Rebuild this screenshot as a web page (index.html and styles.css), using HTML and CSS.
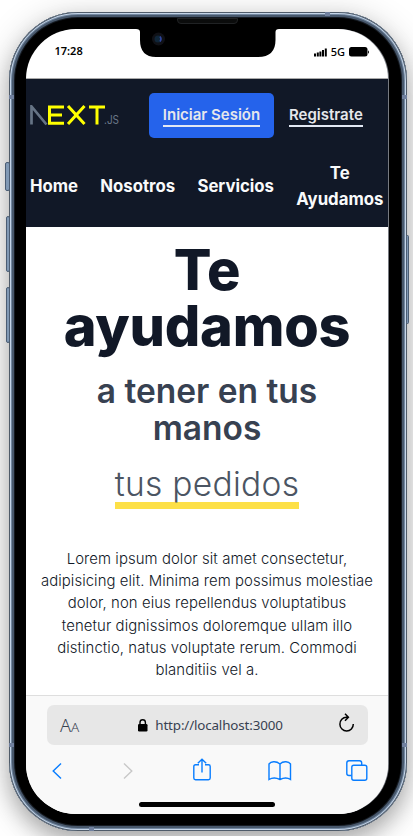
FILE: index.html
```html
<!DOCTYPE html>
<html lang="es">
<head>
<meta charset="utf-8">
<meta name="viewport" content="width=device-width, initial-scale=1">
<title>Te ayudamos</title>
<link rel="stylesheet" href="styles.css">
</head>
<body>
<div class="phone">
  <i class="key mute"></i><i class="key up"></i><i class="key down"></i><i class="key power"></i>
  <i class="band b1"></i><i class="band b2"></i><i class="band b3"></i><i class="band b4"></i><i class="band b5"></i><i class="band b6"></i>
  <svg class="notch" viewBox="0 0 143 29" width="143" height="29"><path d="M0 0H143V1Q139.500 1 139.500 4V12Q139.500 29 122 29H20Q4 29 4 12V4Q4 1 0 1Z"/><circle cx="22.500" cy="11" r="6.500" fill="#101116"/><circle cx="22" cy="11" r="3.500" fill="#102638"/><path d="M24 8.500q2 2.500 0 5" stroke="#3046a0" stroke-width="1.500" fill="none"/></svg>
  <i class="speaker"></i>
  <div class="screen">
    <div class="status">
      <span class="time">17:28</span>
      <span class="signal">
        <svg width="13" height="9" viewBox="0 0 13 9"><path d="M0 5.500h2V8.500H0zM2.800 4.500h2v4h-2zM5.400 3.500h2v5h-2zM8 2h2v6.500H8zM10.800 .5h2v8h-2z"/></svg>
        <b>5G</b>
        <svg width="20" height="10" viewBox="0 0 20 10"><rect width="18.500" height="9.500" rx="2.500"/><path d="M19 3.200q2 1.800 0 3.600z"/></svg>
      </span>
    </div>
    <header class="site-header">
      <div class="top">
        <svg class="logo" width="92" height="22" viewBox="0 0 92 22">
          <path d="M1.500 19.500V1.500L16.500 19.500" fill="none" stroke="#667485" stroke-width="2.700"/>
          <path d="M34 2H19.500V18.300H34M20 10H32M38 1L54.500 19M54.500 1L38 19M59 2H75M67 2V19.500" fill="none" stroke="#ffff00" stroke-width="3"/>
          <text x="74" y="19" class="js" textLength="15" lengthAdjust="spacingAndGlyphs">.JS</text>
        </svg>
        <a class="login"><span class="ul">Iniciar Sesión</span></a>
        <a class="ul register">Registrate</a>
      </div>
      <nav class="nav"><a>Home</a><a>Nosotros</a><a>Servicios</a><a>Te<br>Ayudamos</a></nav>
    </header>
    <main class="hero">
      <h1>Te<br>ayudamos</h1>
      <h2>a tener en tus<br>manos</h2>
      <h3><span>tus pedidos</span></h3>
      <p>Lorem ipsum dolor sit amet consectetur,<br>adipisicing elit. Minima rem possimus molestiae<br>dolor, non eius repellendus voluptatibus<br>tenetur dignissimos doloremque ullam illo<br>distinctio, natus voluptate rerum. Commodi<br>blanditiis vel a.</p>
    </main>
    <footer class="browser">
      <div class="address">
        <span class="aa">A<small>A</small></span>
        <span class="url"><svg width="10" height="13" viewBox="0 0 10 13"><rect y="5" width="9.500" height="7.500" rx="1.200"/><path d="M2 6V3.500a2.700 2.700 0 0 1 5.400 0V6" fill="none" stroke="#000" stroke-width="1.400"/></svg><span>http://localhost:3000</span></span>
        <svg class="reload" width="17" height="20" viewBox="0 0 17 20"><path d="M9.800 4.200H8.500a6.700 6.900 0 1 0 6.800 6.800M7 .8L10.400 4.200L7 7.700" fill="none" stroke="#000" stroke-width="1.500"/></svg>
      </div>
      <div class="tools">
        <svg width="10" height="18" viewBox="0 0 10 18"><path d="M9 1.500L1.200 9L9 16.500"/></svg>
        <svg class="off" width="10" height="18" viewBox="0 0 10 18"><path d="M1 1.500L8.800 9L1 16.500"/></svg>
        <svg class="share" width="18" height="23" viewBox="0 0 18 23"><path d="M6 6.800H2.500Q.8 6.800 .8 8.500V20Q.8 21.700 2.500 21.700H15.500Q17.200 21.700 17.200 20V8.500Q17.200 6.800 15.500 6.800H12M9 14.500V1.500M4.800 5.200L9 1.200L13.200 5.200"/></svg>
        <svg class="book" width="24" height="20" viewBox="0 0 24 20"><path d="M12 18.500V3Q9 .5 5.500 .8Q2.500 1 1 3V18.500Q6 15.500 12 18.500Q18 15.500 22.500 18.500V3Q21 1 18 .8Q14.500 .5 12 3"/></svg>
        <svg class="tabs" width="22" height="21" viewBox="0 0 22 21"><rect x="5.800" y="5.300" width="15" height="15" rx="2"/><path d="M5.500 15.500H3Q.8 15.500 .8 13.500V3Q.8 .8 3 .8H13.500Q15.700 .8 15.700 3V5"/></svg>
      </div>
      <div class="home-bar"></div>
    </footer>
  </div>
</div>
</body>
</html>
```
FILE: styles.css
```css
* { box-sizing: border-box; }
html, body { margin: 0; height: 836px; overflow: hidden; }
body { background: #fff; font-family: Inter, "Noto Sans", sans-serif; }
.phone {
  position: relative; width: 398px; height: 819px; margin: 12px 0 0 9px; padding: 17px 19px 17px 17px;
  border-radius: 69px; background: #000;
  box-shadow: inset 0 0 0 1px #4f5b69, inset 0 0 0 2px #c5d5e8, inset 0 0 0 3px #7388a1, inset 0 0 0 5px #48586c, inset 0 0 0 6px #151a21,
    0 10px 20px rgba(0,0,0,.22), 0 6px 36px rgba(0,0,0,.2);
}
.key { position: absolute; width: 4px; background: #8199b5; border: 1px solid #4b5d74; border-radius: 2px; left: -3px; }
.mute { top: 150px; height: 29px; left: -4px; width: 5px; }
.up { top: 204px; height: 56px; }
.down { top: 275px; height: 56px; }
.power { top: 223px; height: 89px; left: 397px; width: 3px; }
.band { position: absolute; width: 5px; height: 4px; background: #71819f; }
.b1 { left: 0; top: 83px; } .b2 { right: 0; top: 83px; }
.b3 { left: 0; top: 731px; } .b4 { right: 0; top: 731px; }
.b5 { left: 80px; bottom: 0; } .b6 { right: 77px; top: 0; }
.screen { width: 362px; height: 785px; border-radius: 50px; overflow: hidden; background: #fff; display: flex; flex-direction: column; box-shadow: 1px 0 0 #777a80; }
.notch { position: absolute; z-index: 2; left: 127px; top: 16px; }
.speaker { position: absolute; z-index: 3; left: 168px; top: 6px; width: 61px; height: 6px; border-radius: 0 0 4px 4px; background: #0b0c0c; border: 1px solid #202224; }
.status { height: 50px; flex: none; border-bottom: 1px solid #aaa; display: flex; justify-content: space-between; align-items: flex-start; padding: 15px 19px 0 28.500px; font: 600 11px/14px "Noto Sans", sans-serif; color: #000; }
.signal { display: flex; align-items: center; gap: 4px; height: 16px; }
.signal b { font-weight: 500; }
.site-header { height: 148px; flex: none; background: #111827; color: #f9fafb; }
.top { display: flex; padding: 14px 0 0 4px; height: 74px; align-items: flex-start; }
.logo { margin-top: 12px; }
.js { font: 400 11.500px Inter, sans-serif; fill: #6b7787; }
.login { width: 125px; height: 45px; margin: 0 15px 0 27px; border-radius: 5px; background: #2563eb; display: flex; justify-content: center; padding-top: 12px; }
.ul { height: 22px; border-bottom: 2px solid #e2e8f4; font-weight: 600; font-size: 15px; line-height: 19px; color: #e5e7eb; white-space: nowrap; }
.register { margin-top: 12px; }
.nav { display: flex; align-items: center; gap: 22.300px; padding: 0 4px; height: 66px; font-weight: 700; font-size: 16.800px; line-height: 26px; text-align: center; letter-spacing: -.03px; }
.hero { height: 468px; flex: none; text-align: center; }
h1, h2, h3, p { margin: 0; white-space: nowrap; }
h1 { padding-top: 15px; font-size: 55.800px; line-height: 56px; font-weight: 800; color: #111827; letter-spacing: -.25px; }
h2 { margin-top: 19px; font-size: 33.500px; line-height: 37.200px; font-weight: 600; color: #374151; }
h3 { margin-top: 18px; height: 45px; font-size: 33.500px; line-height: 38px; font-weight: 350; letter-spacing: .3px; color: #4b5563; }
h3 span { display: inline-block; height: 44px; border-bottom: 7px solid #fde047; }
p { margin-top: 37.500px; font-size: 14.900px; line-height: 22.200px; font-weight: 300; letter-spacing: .08px; color: #111827; }
.browser { flex: 1; background: #f9f9f9; border-top: 1px solid #dedede; padding: 9px 20px 0 21px; }
.address { height: 40px; border-radius: 7px; background: #e7e7e7; display: flex; align-items: center; justify-content: space-between; padding: 0 13px 0 13px; font-family: "Noto Sans", sans-serif; color: #374151; }
.aa { font-size: 18px; font-weight: 350; width: 22px; } .aa small { font-size: 13.500px; }
.url { display: flex; align-items: center; gap: 7px; font-size: 13.400px; letter-spacing: -.15px; padding-left: 1px; }
.reload { margin-top: -4px; }
.tools { display: flex; align-items: center; height: 52px; padding-left: 5px; fill: none; stroke: #087dff; stroke-width: 1.400; }
.off { stroke: #c8c8c8; margin-left: 61px; }
.share { margin: -4px 0 0 60px; }
.book { margin-left: 57px; }
.tabs { margin: -2px 0 0 54px; }
.home-bar { width: 136px; height: 5px; border-radius: 3px; background: #000; margin: 5px 0 0 92px; }
```
